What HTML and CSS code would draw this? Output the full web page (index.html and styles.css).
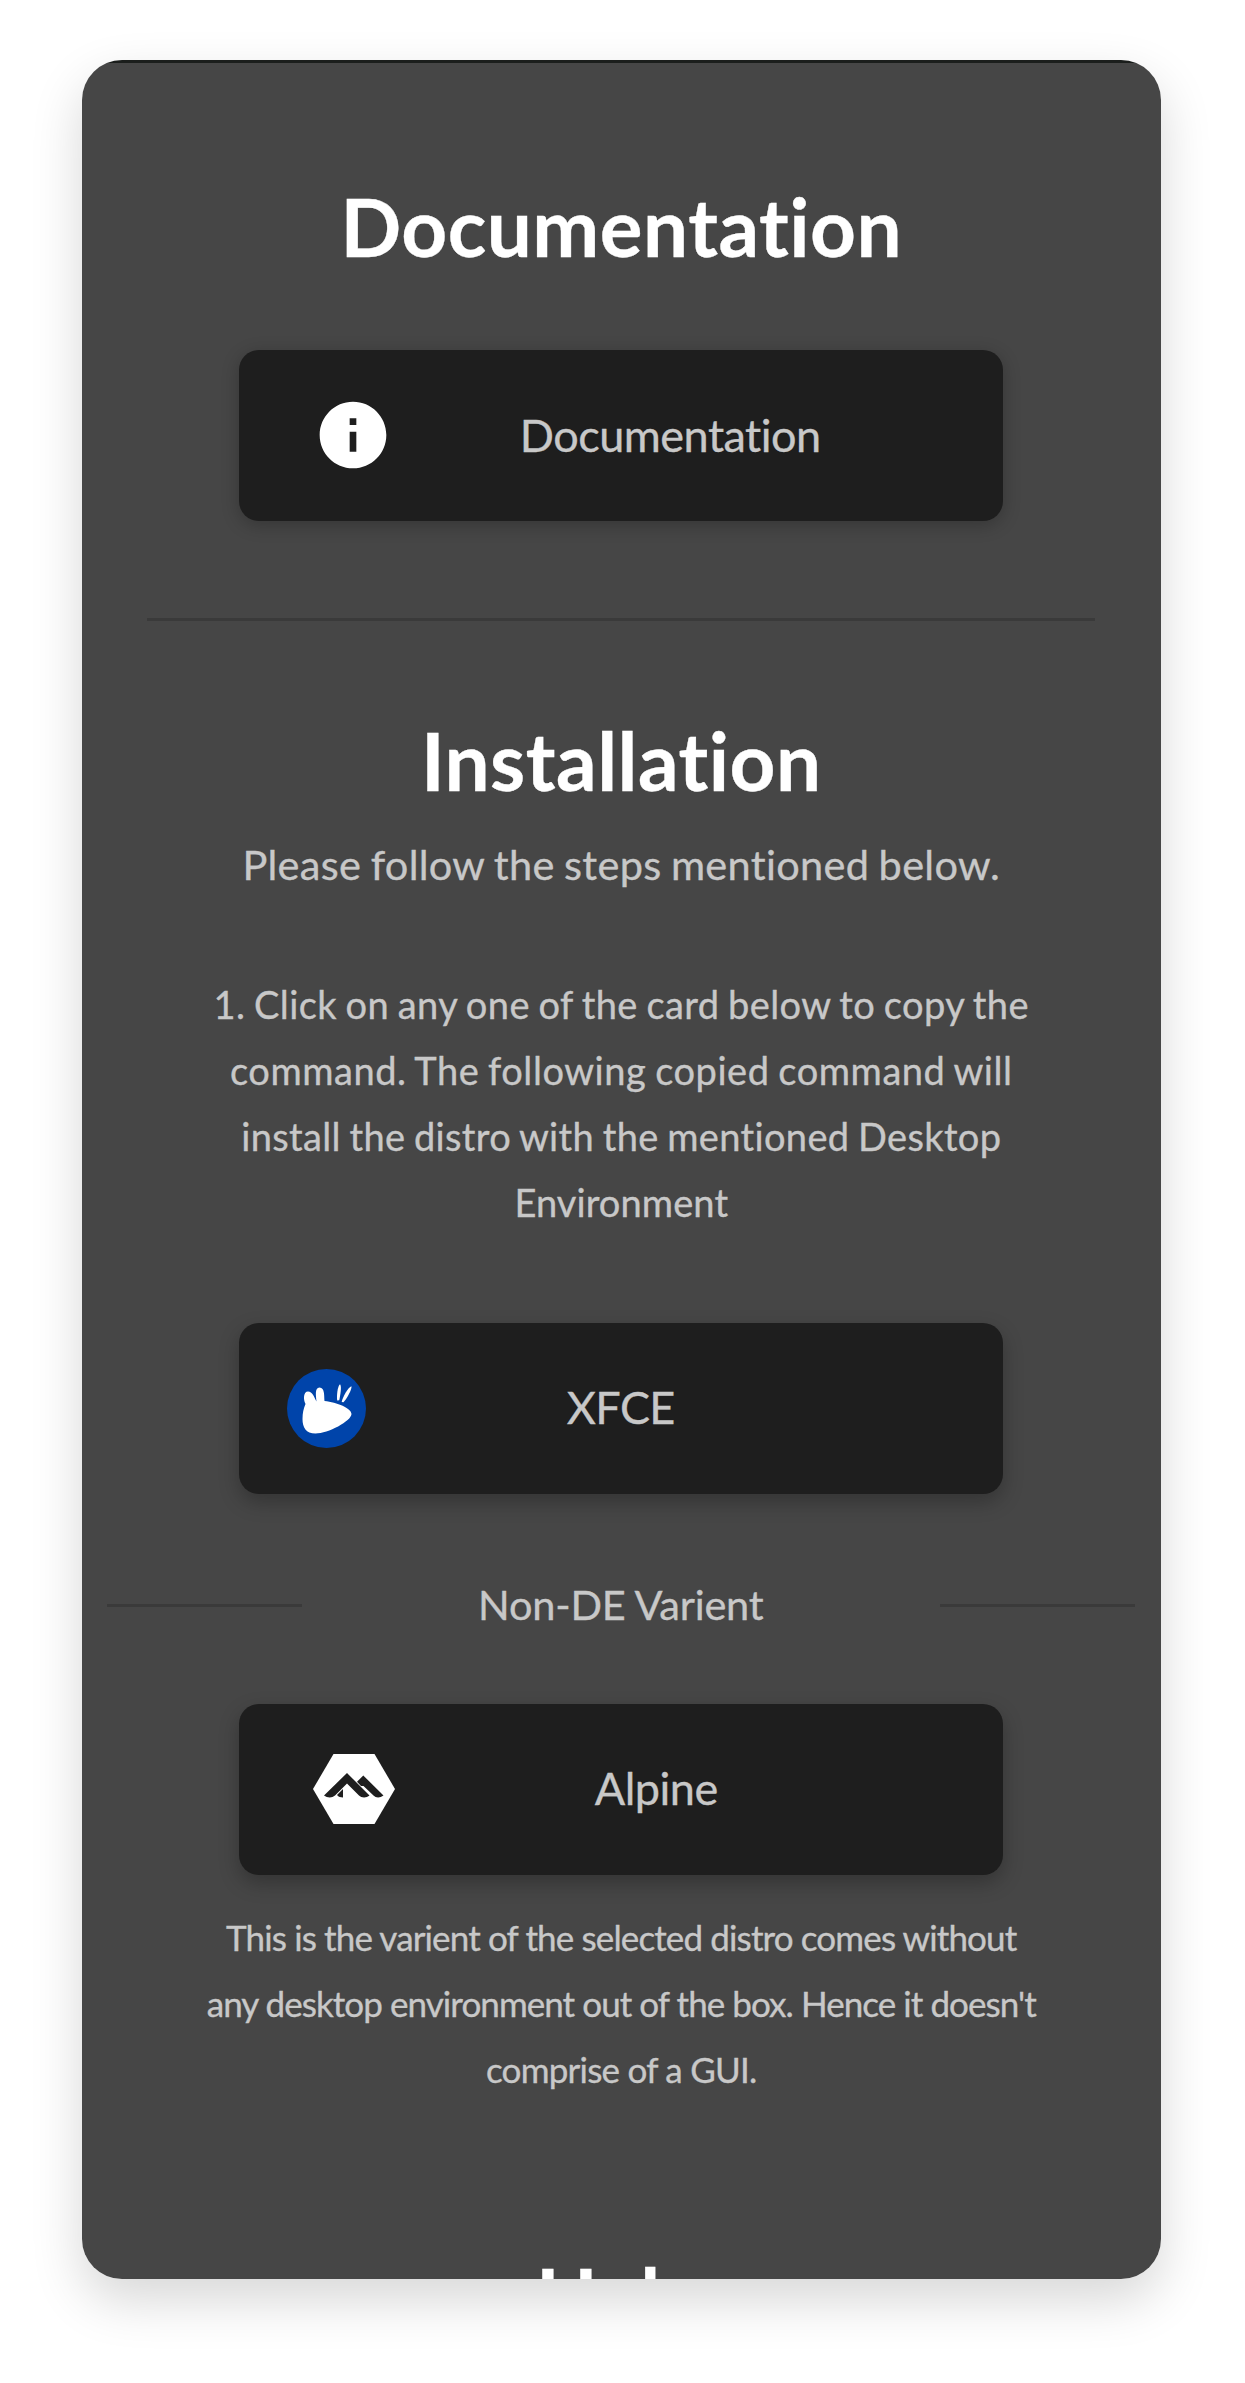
FILE: index.html
```
<!DOCTYPE html>
<html lang="en">
<head>
<meta charset="utf-8">
<title>Documentation</title>
<link rel="stylesheet" href="styles.css">
</head>
<body>
<main class="screen">
  <h1 class="title title-docs">Documentation</h1>
  <a class="card card-docs">
    <span class="card-icon">
      <svg class="icon-info" viewBox="0 0 24 24"><path fill="#fff" d="M12 2C6.48 2 2 6.48 2 12s4.48 10 10 10 10-4.48 10-10S17.52 2 12 2zm1 15h-2v-6h2v6zm0-8h-2V7h2v2z"/></svg>
    </span>
    <span class="card-label">Documentation</span>
  </a>
  <hr class="divider">

  <h2 class="title title-install">Installation</h2>
  <p class="lead">Please follow the steps mentioned below.</p>
  <p class="steps">
    <span class="s1">1. Click on any one of the card below to copy the</span>
    <span class="s2">command. The following copied command will</span>
    <span class="s3">install the distro with the mentioned Desktop</span>
    <span class="s4">Environment</span>
  </p>
  <a class="card card-xfce">
    <span class="card-icon">
      <svg class="icon-xfce" viewBox="0 0 79 79">
        <circle cx="39.5" cy="39.5" r="39.5" fill="#0044aa"/>
        <g fill="#fff">
          <path d="M18.500 35C16 30 16.500 22.500 21 22.500C25.500 22.500 27 28 29.500 32.500C29 27 27.500 18.500 32.500 18.500C38 18.500 37 27 37.500 32C50 33.500 64.500 39 64.500 45C64.500 52 41 64.500 28.500 64.500C19 64.500 15.500 58.500 15.500 50C15.500 44 16.500 39.500 18.500 35Z"/>
          <path d="M50.200 31.500C49.500 27 50.500 17 53 15.200C55 17 53.200 27 52.200 31.200Z"/>
          <path d="M54.700 33C55.500 28 61 18.500 64.500 17.200C65 20.500 59.500 30 56.500 33.300Z"/>
        </g>
      </svg>
    </span>
    <span class="card-label">XFCE</span>
  </a>

  <div class="variant">
    <hr class="rule">
    <span class="variant-label">Non-DE Varient</span>
    <hr class="rule">
  </div>
  <a class="card card-alpine">
    <span class="card-icon">
      <svg class="icon-alpine" viewBox="0 0 82 70">
        <path fill="#fff" d="M20.500 0H61.500L82 35L61.500 70H20.500L0 35Z"/>
        <g fill="#1e1e1e">
          <path d="M34 19L56.500 41.500C53.500 44 48.500 44 46 41.500L34 29.500L22 41.500C19 44 14.500 44 11 41.500Z"/>
          <path d="M50.300 21.500L70.500 41.500C67 44 63 44 60.500 41.500L50.500 32H48L44 27.800Z"/>
          <path d="M30 35V43.500C27.500 43.500 25.500 42.800 24 41Z"/>
        </g>
      </svg>
    </span>
    <span class="card-label">Alpine</span>
  </a>
  <p class="note">
    <span class="n1">This is the varient of the selected distro comes without</span>
    <span class="n2">any desktop environment out of the box. Hence it doesn't</span>
    <span class="n3">comprise of a GUI.</span>
  </p>

  <h2 class="title title-help">Help</h2>
</main>
</body>
</html>
```
FILE: styles.css
```
* { box-sizing: border-box; }

body {
  margin: 0;
  height: 2383px;
  padding: 60px 84px 0 81.5px;
  overflow: hidden;
  background: #fff;
  font-family: Lato, "Open Sans", sans-serif;
  font-variant-ligatures: none;
  color: #c8c8c8;
  -webkit-text-stroke: .35px currentColor;
}

.screen {
  display: flex;
  flex-direction: column;
  align-items: center;
  height: 2218.500px;
  padding-top: 3px;
  overflow: hidden;
  border-radius: 40px;
  background: linear-gradient(#1b1e1c 3px, #464646 3px);
  box-shadow: 0 21px 52px rgba(0, 0, 0, .16);
  text-align: center;
}

h1, h2, p { margin: 0; flex: none; }
hr { margin: 0; border: 0; flex: none; }

.title {
  color: #fff;
  font-size: 80px;
  font-weight: 700;
  line-height: 96px;
  letter-spacing: .5px;
}
.title-docs { margin-top: 115px; }
.title-install { margin-top: 91px; }
.title-help { margin-top: 146px; }

.card {
  display: flex;
  align-items: center;
  flex: none;
  width: 764px;
  height: 171px;
  border-radius: 20px;
  background: #1e1e1e;
  box-shadow: 0 8px 20px rgba(0, 0, 0, .26);
}
.card-docs { margin-top: 76px; box-shadow: 0 4px 18px rgba(0, 0, 0, .24); }
.card-xfce { margin-top: 88px; }
.card-alpine { margin-top: 71px; }

.card-icon {
  display: flex;
  justify-content: center;
  flex: none;
  width: 229px;
}
.card-docs .card-icon { width: 228px; padding-bottom: 1px; }
.card-xfce .card-icon { width: 175px; }
.card-alpine .card-icon { padding-bottom: 1px; }
.icon-info { width: 80px; height: 80px; }
.icon-xfce { width: 79px; height: 79px; }
.icon-alpine { width: 82px; height: 70px; }

.card-label {
  width: 406px;
  font-size: 45px;
  line-height: 54px;
  letter-spacing: -.5px;
}
.card-docs .card-label { padding-bottom: 2px; }
.card-xfce .card-label { padding: 0 0 4px 7px; letter-spacing: -.6px; }
.card-alpine .card-label { width: 376px; padding-bottom: 4px; letter-spacing: -.5px; }

.divider { width: 948px; height: 3px; margin-top: 97px; background: #3a3a3a; }

.lead {
  margin-top: 23px;
  font-size: 41.5px;
  line-height: 66px;
  letter-spacing: .3px;
  word-spacing: -1.5px;
}

.steps, .note { display: flex; flex-direction: column; white-space: nowrap; line-height: 66px; }
.steps { margin-top: 74px; font-size: 38px; word-spacing: -1.5px; }
.s1 { letter-spacing: .4px; }
.s2 { letter-spacing: .55px; }
.s3 { letter-spacing: .35px; }
.s4 { letter-spacing: .1px; }

.variant {
  display: flex;
  align-items: center;
  justify-content: space-between;
  flex: none;
  width: 1028px;
  height: 60px;
  margin-top: 79px;
}
.rule { width: 195px; height: 3px; margin-top: 4px; background: #3a3a3a; }
.variant-label { padding: 1px 1px 0 0; font-size: 41.5px; letter-spacing: -.2px; }

.note { margin-top: 29px; font-size: 35px; }
.n1 { letter-spacing: -.86px; }
.n2 { letter-spacing: -.94px; }
.n3 { letter-spacing: -.75px; }
```
